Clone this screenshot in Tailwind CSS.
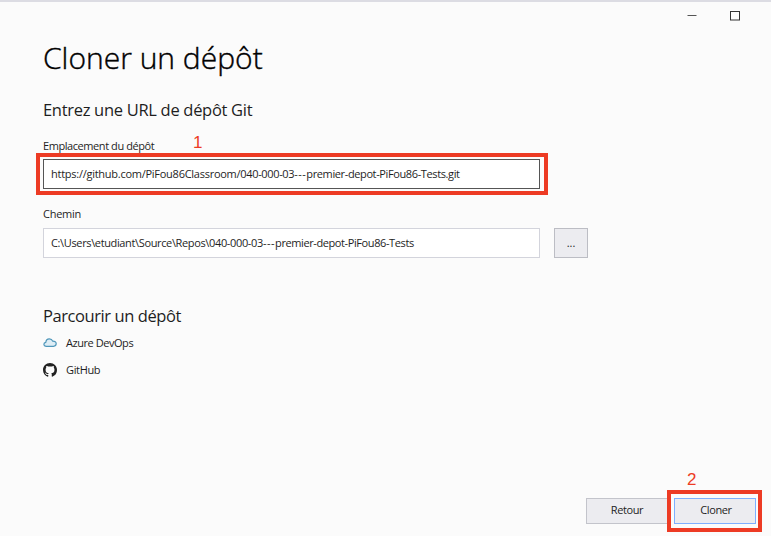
<!DOCTYPE html>
<html lang="fr">
<head>
<meta charset="utf-8">
<title>Cloner un dépôt</title>
<script src="https://cdn.jsdelivr.net/npm/@tailwindcss/browser@4"></script>
</head>
<body class="bg-[#fbfbfb]">
<div class="relative flex h-[536px] w-[771px] flex-col overflow-hidden border-t-2 border-[#dcdce3] bg-[#fbfbfb] font-['Open_Sans','Noto_Sans',sans-serif] text-[11px] text-[#1e1e1e]">
  <header class="flex h-[28px] shrink-0 items-center justify-end gap-[33px] pr-[31px]">
    <svg class="size-[10px]" viewBox="0 0 10 10"><path d="M0.5 4.5H9.5" stroke="#555" fill="none"/></svg>
    <svg class="size-[10px]" viewBox="0 0 10 10"><rect x=".5" y=".5" width="9" height="8.5" stroke="#333" fill="none"/></svg>
  </header>
  <main class="flex flex-1 flex-col pl-[43px]">
    <h1 class="mt-[8px] h-[40px] whitespace-nowrap text-[30px] leading-[40px] font-light tracking-[0px] text-black [-webkit-text-stroke:0.4px_#000]">Cloner un dépôt</h1>
    <h2 class="mt-[20px] h-[24px] whitespace-nowrap text-[16.5px] leading-[24px] tracking-[-0.3px]">Entrez une URL de dépôt Git</h2>
    <label class="mt-[15px] h-[18px] leading-[18px] tracking-[-0.43px]">Emplacement du dépôt</label>
    <div class="mt-[4px] flex h-[30px] w-[497px] items-center border border-[#555] bg-white pl-[7px] whitespace-nowrap"><span class="tracking-[-0.26px]">https://github.com/PiFou86Classroom/</span><span class="tracking-[-0.35px]">040-000-03</span><span class="tracking-[0.5px]">---</span><span class="tracking-[-0.38px]">premier-depot-PiFou86-Tests.git</span></div>
    <label class="mt-[16px] h-[18px] leading-[18px] tracking-[-0.25px]">Chemin</label>
    <div class="mt-[5px] flex gap-[14px]">
      <div class="flex h-[30px] w-[497px] items-center border border-[#d3d4dc] bg-white pl-[7px] whitespace-nowrap"><span class="tracking-[-0.36px]">C:\Users\etudiant\Source\Repos\</span><span class="tracking-[-0.35px]">040-000-03</span><span class="tracking-[0.5px]">---</span><span class="tracking-[-0.4px]">premier-depot-PiFou86-Tests</span></div>
      <button class="h-[30px] w-[34px] border border-[#bcbdc4] bg-[#ececf0]">...</button>
    </div>
    <h2 class="mt-[46px] h-[24px] whitespace-nowrap text-[16.5px] leading-[24px] tracking-[-0.42px]">Parcourir un dépôt</h2>
    <div class="mt-[6px] flex h-[18px] items-center gap-[9px] tracking-[-0.45px]">
      <svg class="h-[14px] w-[14px]" viewBox="0 0 14 14"><path d="M3.4 10.3C1.8 10.3.9 9.5.9 8.3c0-1.1.8-1.9 1.9-2C3 4.1 4.3 2.8 6.3 2.8c1.7 0 2.9.9 3.4 2.3 2-.1 3.5.9 3.5 2.5s-1.1 2.7-2.7 2.7Z" fill="#deedf5" stroke="#5097ba" stroke-width="1.2"/></svg>
      <span>Azure DevOps</span>
    </div>
    <div class="mt-[9px] flex h-[18px] items-center gap-[9px] tracking-[-0.35px]">
      <svg class="h-[14px] w-[14px]" viewBox="0 0 16 16"><path fill="#222" d="M8 0C3.58 0 0 3.58 0 8c0 3.54 2.29 6.53 5.47 7.59.4.07.55-.17.55-.38 0-.19-.01-.82-.01-1.49-2.01.37-2.53-.49-2.69-.94-.09-.23-.48-.94-.82-1.13-.28-.15-.68-.52-.01-.53.63-.01 1.08.58 1.23.82.72 1.21 1.87.87 2.33.66.07-.52.28-.87.51-1.07-1.78-.2-3.64-.89-3.64-3.95 0-.87.31-1.59.82-2.15-.08-.2-.36-1.02.08-2.12 0 0 .67-.21 2.2.82a7.6 7.6 0 0 1 4 0c1.53-1.04 2.2-.82 2.2-.82.44 1.1.16 1.92.08 2.12.51.56.82 1.27.82 2.15 0 3.07-1.87 3.75-3.65 3.95.29.25.54.73.54 1.48 0 1.07-.01 1.93-.01 2.2 0 .21.15.46.55.38A8 8 0 0 0 16 8c0-4.42-3.58-8-8-8Z"/></svg>
      <span>GitHub</span>
    </div>
  </main>
  <footer class="flex h-[38px] shrink-0 gap-[6px] pl-[586px] tracking-[-0.4px]">
    <button class="h-[26px] w-[82px] border border-[#c3c4cb] bg-[#ececf0] pb-[2px]">Retour</button>
    <button class="h-[26px] w-[82px] border border-[#7eafff] bg-[#ececf0] pb-[2px] pl-[2px]">Cloner</button>
  </footer>
  <div class="absolute top-[151px] left-[36px] h-[42px] w-[512px] border-4 border-[#ed3b24]"></div>
  <div class="absolute top-[488px] left-[667px] h-[42px] w-[95px] border-4 border-[#ed3b24]"></div>
  <span class="absolute top-[131px] left-[193px] font-['Liberation_Sans',sans-serif] text-[17px] leading-[20px] text-[#ed3b24]">1</span>
  <span class="absolute top-[468px] left-[687px] font-['Liberation_Sans',sans-serif] text-[17px] leading-[20px] text-[#ed3b24]">2</span>
</div>
</body>
</html>
